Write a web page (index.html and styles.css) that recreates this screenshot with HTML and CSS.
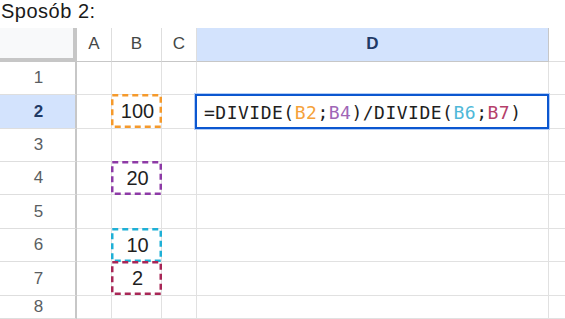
FILE: index.html
```html
<!DOCTYPE html>
<html lang="pl">
<head>
<meta charset="utf-8">
<title>Sposób 2</title>
<link rel="stylesheet" href="styles.css">
</head>
<body>
<div class="title">Sposób 2:</div>
<div class="sheet">
  <div class="corner"></div>
  <div class="colhead">A</div>
  <div class="colhead">B</div>
  <div class="colhead">C</div>
  <div class="colhead sel">D</div>
  <div class="colhead blank"></div>

  <div class="rowhead">1</div>
  <div class="cell"></div><div class="cell"></div><div class="cell"></div><div class="cell"></div><div class="cell"></div>

  <div class="rowhead sel">2</div>
  <div class="cell"></div>
  <div class="cell val">100<svg class="dash" width="51" height="34"><rect x="1.25" y="1.25" width="48.5" height="31.5" stroke="#f59a2c"/></svg></div>
  <div class="cell"></div>
  <div class="cell edit"><div class="editor">=DIVIDE(<span class="r1">B2</span>;<span class="r2">B4</span>)/DIVIDE(<span class="r3">B6</span>;<span class="r4">B7</span>)</div></div>
  <div class="cell"></div>

  <div class="rowhead">3</div>
  <div class="cell"></div><div class="cell"></div><div class="cell"></div><div class="cell"></div><div class="cell"></div>

  <div class="rowhead">4</div>
  <div class="cell"></div>
  <div class="cell val">20<svg class="dash" width="51" height="34"><rect x="1.25" y="1.25" width="48.5" height="31.5" stroke="#8d3aa6"/></svg></div>
  <div class="cell"></div><div class="cell"></div><div class="cell"></div>

  <div class="rowhead">5</div>
  <div class="cell"></div><div class="cell"></div><div class="cell"></div><div class="cell"></div><div class="cell"></div>

  <div class="rowhead">6</div>
  <div class="cell"></div>
  <div class="cell val">10<svg class="dash" width="51" height="34"><rect x="1.25" y="1.25" width="48.5" height="31.5" stroke="#1fb0d6"/></svg></div>
  <div class="cell"></div><div class="cell"></div><div class="cell"></div>

  <div class="rowhead">7</div>
  <div class="cell"></div>
  <div class="cell val">2<svg class="dash" width="51" height="34"><rect x="1.25" y="1.25" width="48.5" height="31.5" stroke="#a82656"/></svg></div>
  <div class="cell"></div><div class="cell"></div><div class="cell"></div>

  <div class="rowhead">8</div>
  <div class="cell"></div><div class="cell"></div><div class="cell"></div><div class="cell"></div><div class="cell"></div>
</div>
</body>
</html>
```
FILE: styles.css
```css
* { box-sizing: border-box; }
html, body { margin: 0; padding: 0; background: #ffffff; overflow: hidden; }
body { font-family: "Liberation Sans", Arial, sans-serif; color: #1f1f1f; }

.title {
  height: 28px;
  font-size: 20px;
  line-height: 22px;
  letter-spacing: 0.5px;
  color: #1a1a1a;
  padding-left: 1px;
}

.sheet {
  display: grid;
  grid-template-columns: 77px 35px 50px 35px 352px 16px;
  grid-template-rows: 34px 33px 34px 33px 33px 34px 33px 34px 23px;
}

.corner {
  background: #f8f9fa;
  border-right: 4px solid #c6c6c6;
  border-bottom: 4px solid #c6c6c6;
}

.colhead {
  display: flex;
  align-items: center;
  justify-content: center;
  font-size: 17px;
  color: #444746;
  border-right: 1px solid #dedede;
  border-bottom: 1px solid #c7c7c7;
  padding-bottom: 2px;
}
.colhead.sel {
  background: #d3e3fd;
  color: #1f3a66;
  font-weight: bold;
  border-right-color: #c7c7c7;
}
.colhead.blank { border-right: none; border-bottom-color: #dedede; }

.rowhead {
  display: flex;
  align-items: center;
  justify-content: center;
  font-size: 17px;
  color: #5a5e62;
  border-right: 2px solid #c7c7c7;
  border-bottom: 1px solid #dedede;
  padding-left: 2px;
}
.rowhead.sel {
  background: #d3e3fd;
  color: #1f3a66;
  font-weight: bold;
}

.cell {
  position: relative;
  border-right: 1px solid #e1e1e1;
  border-bottom: 1px solid #e1e1e1;
}
.cell:nth-child(6n) { border-right: none; }

.val {
  display: flex;
  align-items: center;
  justify-content: center;
  font-size: 20px;
  color: #1f1f1f;
  padding-left: 2px;
}

.dash {
  position: absolute;
  left: -1px;
  top: -1px;
}
.dash rect {
  fill: none;
  stroke-width: 2.5;
  stroke-dasharray: 6 4;
}

.editor {
  position: absolute;
  left: -2px;
  top: -1px;
  right: -1px;
  bottom: -1px;
  background: #ffffff;
  border: 2px solid #0b57d0;
  box-shadow: 0 0 0 1px #b3cdf7;
  display: flex;
  align-items: center;
  padding-left: 7px;
  padding-top: 2px;
  font-family: "DejaVu Sans Mono", monospace;
  font-size: 18px;
  letter-spacing: 0.5px;
  color: #1f1f1f;
  white-space: nowrap;
  z-index: 2;
}
.r1 { color: #f5a23a; }
.r2 { color: #a066b6; }
.r3 { color: #4fb8d8; }
.r4 { color: #b5406a; }
```
